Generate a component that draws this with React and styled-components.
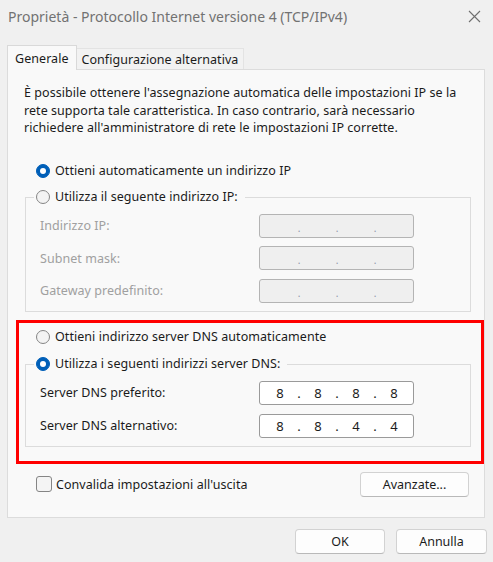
import React from 'react';
import styled, { createGlobalStyle } from 'styled-components';

const GlobalStyle = createGlobalStyle`
  html, body {
    margin: 0;
    padding: 0;
    background: #f0f0f0;
  }
  body {
    font-family: "Noto Sans", "Liberation Sans", sans-serif;
    font-size: 12.5px;
    letter-spacing: 0.05px;
    color: #1b1b1b;
  }
`;

const Window = styled.div`
  width: 493px;
  height: 562px;
  display: flex;
  flex-direction: column;
  background: #f0f0f0;
  box-sizing: border-box;
  overflow: hidden;
`;

const TitleBar = styled.div`
  height: 32px;
  display: flex;
  align-items: center;
  justify-content: space-between;
  padding: 0 12px 0 8px;
`;

const Title = styled.div`
  font-size: 14px;
  color: #727272;
  letter-spacing: 0;
`;

const Close = styled.svg`
  width: 13px;
  height: 13px;
`;

const Tabs = styled.div`
  display: flex;
  align-items: flex-end;
  margin: 13px 0 0 7px;
  height: 24px;
  position: relative;
  z-index: 1;
`;

const Tab = styled.div`
  box-sizing: border-box;
  display: flex;
  align-items: center;
  padding: 0 ${(p) => (p.$active ? '7px' : '5px')};
  height: ${(p) => (p.$active ? '25px' : '21px')};
  margin-bottom: ${(p) => (p.$active ? '-1px' : '0')};
  background: ${(p) => (p.$active ? '#f9f9f9' : '#f2f2f2')};
  border: 1px solid ${(p) => (p.$active ? '#d9d9d9' : '#e3e3e3')};
  border-bottom: none;
  border-left: ${(p) => (p.$active ? '1px solid #d9d9d9' : 'none')};
  color: #1b1b1b;
`;

const Panel = styled.div`
  margin: 0 8px 0 7px;
  height: 449px;
  box-sizing: border-box;
  background: #f9f9f9;
  border: 1px solid #dcdcdc;
  display: flex;
  flex-direction: column;
`;

const Description = styled.p`
  margin: 14px 0 0 16px;
  line-height: 17.5px;
`;

const Options = styled.div`
  display: flex;
  flex-direction: column;
  margin: ${(p) => p.$top}px 0 0 ${(p) => p.$left}px;
`;

const RadioRow = styled.label`
  display: flex;
  align-items: center;
  gap: 5px;
  height: 20px;
  color: #1b1b1b;
`;

const RadioDot = styled.span`
  box-sizing: border-box;
  width: 14px;
  height: 14px;
  border-radius: 50%;
  flex: none;
  display: flex;
  align-items: center;
  justify-content: center;
  background: ${(p) => (p.$checked ? '#005fb8' : '#f3f3f3')};
  border: 1px solid ${(p) => (p.$checked ? '#005fb8' : '#858585')};
  &::after {
    content: '';
    display: ${(p) => (p.$checked ? 'block' : 'none')};
    width: 6px;
    height: 6px;
    border-radius: 50%;
    background: #fff;
  }
`;

const Group = styled.div`
  box-sizing: border-box;
  width: 446px;
  border: 1px solid #dcdcdc;
  margin: ${(p) => p.$top}px 0 0 ${(p) => p.$left}px;
  padding: 0 0 ${(p) => p.$bottom}px 14px;
  display: flex;
  flex-direction: column;
`;

const Legend = styled.div`
  align-self: flex-start;
  margin: -11px 0 0 -6px;
  padding: 0 7px 0 2px;
  background: #f9f9f9;
`;

const Fields = styled.div`
  display: flex;
  flex-direction: column;
  gap: ${(p) => p.$gap}px;
  margin-top: 7px;
`;

const FieldRow = styled.div`
  display: flex;
  align-items: center;
  height: 24px;
`;

const FieldLabel = styled.span`
  width: 219px;
  color: ${(p) => (p.$disabled ? '#a0a0a0' : '#1b1b1b')};
`;

const IpBox = styled.div`
  box-sizing: border-box;
  width: 155px;
  height: 24px;
  border-radius: 3px;
  border: 1px solid ${(p) => (p.$disabled ? '#b4b4b4' : '#9a9a9a')};
  background: ${(p) => (p.$disabled ? '#efefef' : '#ffffff')};
  display: grid;
  grid-template-columns: 30px 8px 30px 8px 30px 8px 30px;
  align-items: center;
  padding-left: 5px;
  font-size: 13px;
  color: #1b1b1b;
`;

const Octet = styled.span`
  text-align: center;
`;

const Sep = styled.span`
  text-align: center;
  color: ${(p) => (p.$disabled ? '#8e93a6' : '#1b1b1b')};
  font-size: ${(p) => (p.$disabled ? '10px' : '13px')};
  padding-top: ${(p) => (p.$disabled ? '4px' : '0')};
`;

const Highlight = styled.div`
  box-sizing: border-box;
  margin: 8px 0 0 8px;
  width: 468px;
  border: 3px solid #ff0000;
  padding: 4px 0 14px 0;
  display: flex;
  flex-direction: column;
`;

const BottomRow = styled.div`
  display: flex;
  align-items: center;
  justify-content: space-between;
  margin: 8px 15px 0 28px;
  height: 25px;
`;

const CheckRow = styled.label`
  display: flex;
  align-items: center;
  gap: 4px;
`;

const CheckBox = styled.span`
  box-sizing: border-box;
  width: 16px;
  height: 16px;
  border-radius: 3px;
  border: 1px solid #858585;
  background: #f4f4f4;
`;

const Button = styled.button`
  box-sizing: border-box;
  width: ${(p) => p.$width}px;
  height: 25px;
  border-radius: 4px;
  border: 1px solid #d2d2d2;
  border-bottom-color: #b9b9b9;
  background: #fdfdfd;
  font-family: inherit;
  font-size: 12.5px;
  color: #1b1b1b;
  padding: 0;
`;

const Footer = styled.div`
  display: flex;
  justify-content: flex-end;
  gap: 11px;
  margin: 11px 6px 0 0;
`;

const IpField = ({ label, value, disabled }) => {
  const parts = value ? value.split('.') : ['', '', '', ''];
  return (
    <FieldRow>
      <FieldLabel $disabled={disabled}>{label}</FieldLabel>
      <IpBox $disabled={disabled}>
        {parts.map((part, i) => (
          <React.Fragment key={i}>
            {i > 0 && <Sep $disabled={disabled}>.</Sep>}
            <Octet>{part}</Octet>
          </React.Fragment>
        ))}
      </IpBox>
    </FieldRow>
  );
};

const Radio = ({ checked, children }) => (
  <RadioRow>
    <RadioDot $checked={checked} />
    {children}
  </RadioRow>
);

const App = () => {
  return (
    <Window>
      <GlobalStyle />
      <TitleBar>
        <Title>Proprietà - Protocollo Internet versione 4 (TCP/IPv4)</Title>
        <Close viewBox="0 0 13 13">
          <path d="M1 1L12 12M12 1L1 12" stroke="#6f6f6f" strokeWidth="1.1" fill="none" />
        </Close>
      </TitleBar>

      <Tabs>
        <Tab $active>Generale</Tab>
        <Tab>Configurazione alternativa</Tab>
      </Tabs>

      <Panel>
        <Description>
          È possibile ottenere l'assegnazione automatica delle impostazioni IP se la
          <br />
          rete supporta tale caratteristica. In caso contrario, sarà necessario
          <br />
          richiedere all'amministratore di rete le impostazioni IP corrette.
        </Description>

        <Options $top={24} $left={28}>
          <Radio checked>Ottieni automaticamente un indirizzo IP</Radio>
        </Options>
        <Group $top={16} $left={17} $bottom={8}>
          <Legend>
            <Radio>Utilizza il seguente indirizzo IP:</Radio>
          </Legend>
          <Fields $gap={8.5}>
            <IpField label="Indirizzo IP:" disabled />
            <IpField label="Subnet mask:" disabled />
            <IpField label="Gateway predefinito:" disabled />
          </Fields>
        </Group>

        <Highlight>
          <Options $top={0} $left={17}>
            <Radio>Ottieni indirizzo server DNS automaticamente</Radio>
          </Options>
          <Group $top={17} $left={6} $bottom={8}>
            <Legend>
              <Radio checked>Utilizza i seguenti indirizzi server DNS:</Radio>
            </Legend>
            <Fields $gap={9}>
              <IpField label="Server DNS preferito:" value="8.8.8.8" />
              <IpField label="Server DNS alternativo:" value="8.8.4.4" />
            </Fields>
          </Group>
        </Highlight>

        <BottomRow>
          <CheckRow>
            <CheckBox />
            Convalida impostazioni all'uscita
          </CheckRow>
          <Button $width={109}>Avanzate...</Button>
        </BottomRow>
      </Panel>

      <Footer>
        <Button $width={90}>OK</Button>
        <Button $width={91}>Annulla</Button>
      </Footer>
    </Window>
  );
};

export default App;
